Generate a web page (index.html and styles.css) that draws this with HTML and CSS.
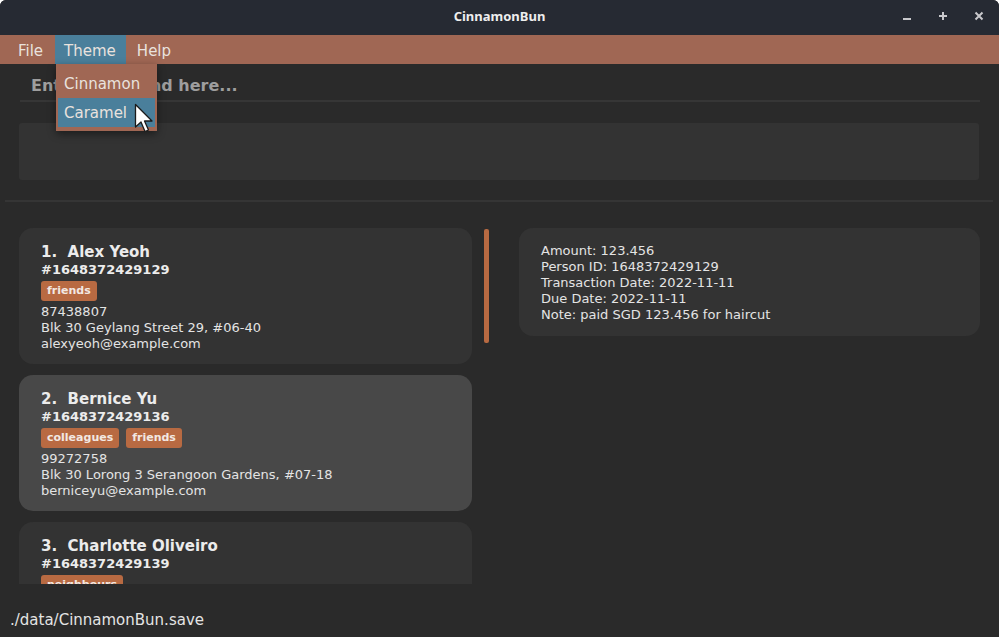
FILE: index.html
```html
<!DOCTYPE html>
<html>
<head>
<meta charset="utf-8">
<link rel="stylesheet" href="styles.css">
</head>
<body>
<div class="app">
  <div class="titlebar">
    <div class="title">CinnamonBun</div>
    <div class="winbtns">
      <span class="wb">
        <svg width="10" height="10" viewBox="0 0 10 10"><rect x="1" y="7" width="8" height="2" fill="#c8c8cc"/></svg>
      </span>
      <span class="wb">
        <svg width="10" height="10" viewBox="0 0 10 10"><rect x="1" y="4" width="8" height="2" fill="#c8c8cc"/><rect x="4" y="1" width="2" height="8" fill="#c8c8cc"/></svg>
      </span>
      <span class="wb">
        <svg width="10" height="10" viewBox="0 0 10 10"><path d="M1.5 1.5 L8.5 8.5 M8.5 1.5 L1.5 8.5" stroke="#c8c8cc" stroke-width="2"/></svg>
      </span>
    </div>
  </div>
  <div class="menubar">
    <span class="menu">File</span>
    <span class="menu active">Theme</span>
    <span class="menu">Help</span>
  </div>
  <div class="command">
    <div class="cmdinput">Enter command here...</div>
  </div>
  <div class="result"></div>
  <div class="sep"></div>
  <div class="content">
    <div class="listpane">
      <div class="list">
        <div class="card">
          <div class="name">1.&nbsp;&nbsp;Alex Yeoh</div>
          <div class="pid">#1648372429129</div>
          <div class="tags"><span class="tag">friends</span></div>
          <div class="line">87438807</div>
          <div class="line">Blk 30 Geylang Street 29, #06-40</div>
          <div class="line">alexyeoh@example.com</div>
        </div>
        <div class="card selected">
          <div class="name">2.&nbsp;&nbsp;Bernice Yu</div>
          <div class="pid">#1648372429136</div>
          <div class="tags"><span class="tag">colleagues</span><span class="tag">friends</span></div>
          <div class="line">99272758</div>
          <div class="line">Blk 30 Lorong 3 Serangoon Gardens, #07-18</div>
          <div class="line">berniceyu@example.com</div>
        </div>
        <div class="card">
          <div class="name">3.&nbsp;&nbsp;Charlotte Oliveiro</div>
          <div class="pid">#1648372429139</div>
          <div class="tags"><span class="tag">neighbours</span></div>
          <div class="line">93210283</div>
          <div class="line">Blk 11 Ang Mo Kio Street 74, #11-04</div>
          <div class="line">charlotte@example.com</div>
        </div>
      </div>
      <div class="scrolltrack"><div class="thumb"></div></div>
    </div>
    <div class="detailpane">
      <div class="detail">
        <div class="line">Amount: 123.456</div>
        <div class="line">Person ID: 1648372429129</div>
        <div class="line">Transaction Date: 2022-11-11</div>
        <div class="line">Due Date: 2022-11-11</div>
        <div class="line">Note: paid SGD 123.456 for haircut</div>
      </div>
    </div>
  </div>
  <div class="status">./data/CinnamonBun.save</div>

  <div class="dropdown">
    <div class="ditem">Cinnamon</div>
    <div class="ditem hl">Caramel</div>
  </div>
  <svg class="cursor" width="24" height="34" viewBox="0 0 24 34">
    <path d="M1.5 1.5 L1.5 24 L7 19 L11 28.5 L14.5 27 L10.5 18 L18 18 Z" fill="#ffffff" stroke="#1a1a1a" stroke-width="1.3" stroke-linejoin="round"/>
  </svg>
</div>
</body>
</html>
```

FILE: styles.css
```css
* { box-sizing: border-box; }
html, body { margin: 0; padding: 0; background: #ffffff; }
body { font-family: "DejaVu Sans", sans-serif; overflow: hidden; }

.app {
  position: relative;
  width: 999px;
  height: 637px;
  display: flex;
  flex-direction: column;
  background: #2a2a2a;
  border-radius: 6px 6px 0 0;
  overflow: hidden;
}

.titlebar {
  height: 35px;
  flex: 0 0 35px;
  background: #262a33;
  display: flex;
  align-items: center;
  justify-content: center;
  position: relative;
}
.title {
  font-family: "Noto Sans", sans-serif;
  font-weight: 700;
  font-size: 13px;
  color: #eeeeee;
  margin-top: -3px;
}
.winbtns {
  position: absolute;
  right: 15px;
  top: 11px;
  display: flex;
  gap: 26px;
}
.wb { width: 10px; height: 10px; display: block; }
.wb svg { display: block; }

.menubar {
  height: 29px;
  flex: 0 0 29px;
  background: #a06754;
  display: flex;
  align-items: stretch;
  padding-left: 7px;
}
.menu {
  font-size: 15px;
  color: #e9e2de;
  padding: 2px 11px 0 11px;
  display: flex;
  align-items: center;
}
.menu.active { background: #4a7f9b; padding: 2px 10px 0 9px; margin-left: 1px; }

.command {
  height: 48px;
  flex: 0 0 48px;
  padding: 8px 19px 0 20px;
}
.cmdinput {
  height: 30px;
  border-bottom: 2px solid #363636;
  font-weight: 700;
  font-size: 16px;
  color: #9e9e9e;
  padding-left: 11px;
  padding-top: 4px;
}

.result {
  margin: 11px 20px 0 19px;
  height: 57px;
  flex: 0 0 57px;
  background: #333333;
  border-radius: 3px;
}

.sep {
  margin: 20px 6px 0 5px;
  height: 2px;
  flex: 0 0 2px;
  background: #353535;
}

.content {
  flex: 0 0 382px;
  height: 382px;
  display: flex;
  overflow: hidden;
}

.listpane {
  width: 500px;
  display: flex;
  padding: 26px 0 0 19px;
  overflow: hidden;
}
.list {
  width: 453px;
  display: flex;
  flex-direction: column;
  gap: 11px;
}
.card {
  background: #333333;
  border-radius: 14px;
  padding: 15px 20px 12px 22px;
  color: #e4e4e4;
  flex: 0 0 auto;
}
.card.selected { background: #484848; }
.name {
  font-weight: 700;
  font-size: 15px;
  line-height: 18px;
  color: #ececec;
}
.pid {
  font-weight: 700;
  font-size: 13px;
  line-height: 17px;
  color: #ececec;
}
.tags {
  display: flex;
  gap: 7px;
  margin-top: 3px;
  margin-bottom: 3px;
}
.tag {
  background: #b86a42;
  color: #f2e8e2;
  font-weight: 700;
  font-size: 11px;
  line-height: 20px;
  height: 20px;
  padding: 0 6px;
  border-radius: 3px;
}
.line {
  font-size: 13px;
  line-height: 16px;
  color: #e4e4e4;
}

.scrolltrack {
  margin-left: 12px;
  padding-top: 1px;
}
.thumb {
  width: 5px;
  height: 114px;
  background: #b86a42;
  border-radius: 2px;
}

.detailpane {
  flex: 1;
  padding: 26px 19px 0 19px;
}
.detail {
  background: #333333;
  border-radius: 14px;
  padding: 15px 22px 13px 22px;
}

.status {
  flex: 1;
  font-size: 15px;
  color: #e4e4e4;
  padding: 27px 0 0 10px;
  background: #2a2a2a;
}

.dropdown {
  position: absolute;
  left: 56px;
  top: 64px;
  width: 101px;
  height: 67px;
  background: #a06754;
  padding: 5px 2px 4px 2px;
  box-shadow: 0 3px 8px rgba(0,0,0,0.45);
}
.ditem {
  font-size: 15px;
  color: #e9e2de;
  height: 29px;
  padding-left: 6px;
  padding-top: 2px;
  line-height: 27px;
}
.ditem.hl { background: #4a7f9b; }

.cursor {
  position: absolute;
  left: 134px;
  top: 103px;
}
```
